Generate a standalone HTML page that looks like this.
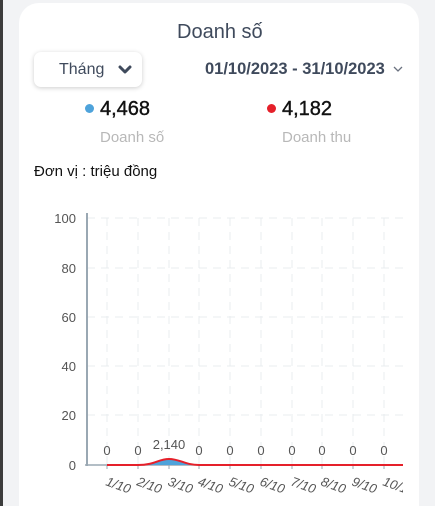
<!DOCTYPE html>
<html style="margin:0;width:435px;height:506px;overflow:hidden"><head><meta charset="utf-8"><style>
body{margin:0;width:435px;height:506px;overflow:hidden;background:#f2f3f5;font-family:"Liberation Sans",sans-serif;position:relative}
.strip{position:absolute;left:0;top:0;width:3px;height:506px;background:#3c3c3c}
.card{position:absolute;left:19px;top:3px;width:400px;height:503px;background:#fff;border-radius:20px 20px 0 0}
.t{position:absolute;white-space:nowrap}
</style></head><body>
<div class="strip"></div>
<div class="card"></div>
<div class="t" style="left:177px;top:21px;font-size:20px;color:#3f4a5c">Doanh số</div>
<div style="position:absolute;left:34px;top:52px;width:108px;height:35px;background:#fff;border-radius:7px;box-shadow:0 1px 5px rgba(0,0,0,.2)"></div>
<div class="t" style="left:59px;top:61px;font-size:16px;color:#3f4a5c">Tháng</div>
<svg style="position:absolute;left:117px;top:64px" width="16" height="12"><path d="M3 3 L8 8 L13 3" stroke="#3f4a5c" stroke-width="3" fill="none" stroke-linecap="round" stroke-linejoin="round"/></svg>
<div class="t" style="left:205px;top:60px;font-size:16.5px;font-weight:bold;color:#3f4a5c">01/10/2023 - 31/10/2023</div>
<svg style="position:absolute;left:393px;top:65px" width="10" height="8"><path d="M1 2 L5 6 L9 2" stroke="#6b7280" stroke-width="1.3" fill="none"/></svg>
<div style="position:absolute;left:85px;top:104px;width:9px;height:9px;border-radius:50%;background:#4ea3db"></div>
<div class="t" style="left:100px;top:98px;font-size:20px;color:#111;-webkit-text-stroke:0.4px #111">4,468</div>
<div class="t" style="left:100px;top:129px;font-size:15px;color:#b8b8b8">Doanh số</div>
<div style="position:absolute;left:267px;top:104px;width:9px;height:9px;border-radius:50%;background:#e5202a"></div>
<div class="t" style="left:282px;top:98px;font-size:20px;color:#111;-webkit-text-stroke:0.4px #111">4,182</div>
<div class="t" style="left:282px;top:129px;font-size:15px;color:#b8b8b8">Doanh thu</div>
<div class="t" style="left:34px;top:163px;font-size:15px;color:#111">Đơn vị : triệu đồng</div>
<svg style="position:absolute;left:0;top:0" width="435" height="506" font-family="Liberation Sans,sans-serif">
<g stroke="#e9ecef" stroke-width="1" stroke-dasharray="8,6">
<line x1="87" y1="218" x2="403" y2="218"/><line x1="87" y1="268" x2="403" y2="268"/><line x1="87" y1="317" x2="403" y2="317"/><line x1="87" y1="366" x2="403" y2="366"/><line x1="87" y1="415" x2="403" y2="415"/>
<line x1="107" y1="218" x2="107" y2="465"/><line x1="138" y1="218" x2="138" y2="465"/><line x1="169" y1="218" x2="169" y2="465"/><line x1="199" y1="218" x2="199" y2="465"/><line x1="230" y1="218" x2="230" y2="465"/><line x1="261" y1="218" x2="261" y2="465"/><line x1="292" y1="218" x2="292" y2="465"/><line x1="322" y1="218" x2="322" y2="465"/><line x1="353" y1="218" x2="353" y2="465"/><line x1="384" y1="218" x2="384" y2="465"/>
</g>
<line x1="87" y1="213" x2="87" y2="466" stroke="#9aa8b3" stroke-width="2"/>
<line x1="85" y1="465" x2="403" y2="465" stroke="#9aa8b3" stroke-width="1.5"/>
<g stroke="#9aa8b3" stroke-width="1"><line x1="107" y1="465" x2="107" y2="469"/><line x1="138" y1="465" x2="138" y2="469"/><line x1="169" y1="465" x2="169" y2="469"/><line x1="199" y1="465" x2="199" y2="469"/><line x1="230" y1="465" x2="230" y2="469"/><line x1="261" y1="465" x2="261" y2="469"/><line x1="292" y1="465" x2="292" y2="469"/><line x1="322" y1="465" x2="322" y2="469"/><line x1="353" y1="465" x2="353" y2="469"/><line x1="384" y1="465" x2="384" y2="469"/></g>
<g font-size="13" fill="#555" text-anchor="end"><text x="76" y="223">100</text><text x="76" y="273">80</text><text x="76" y="322">60</text><text x="76" y="371">40</text><text x="76" y="420">20</text><text x="76" y="470">0</text></g>
<path d="M138 465 C155 465 158 459 169 459 C180 459 185 465 199 465 Z" fill="#4ea3db"/>
<path d="M107 465 L138 465 C155 465 158 459 169 459 C180 459 185 465 199 465 L403 465" stroke="#e5202a" stroke-width="2" fill="none"/>
<g font-size="13" fill="#555" text-anchor="middle"><text x="107" y="455">0</text><text x="138" y="455">0</text><text x="169" y="449">2,140</text><text x="199" y="455">0</text><text x="230" y="455">0</text><text x="261" y="455">0</text><text x="292" y="455">0</text><text x="322" y="455">0</text><text x="353" y="455">0</text><text x="384" y="455">0</text></g>
<g font-size="13" fill="#555" font-style="italic">
<text transform="translate(105,485) rotate(20)">1/10</text><text transform="translate(136,485) rotate(20)">2/10</text><text transform="translate(167,485) rotate(20)">3/10</text><text transform="translate(197,485) rotate(20)">4/10</text><text transform="translate(228,485) rotate(20)">5/10</text><text transform="translate(259,485) rotate(20)">6/10</text><text transform="translate(290,485) rotate(20)">7/10</text><text transform="translate(320,485) rotate(20)">8/10</text><text transform="translate(351,485) rotate(20)">9/10</text><text transform="translate(382,485) rotate(20)">10/1</text>
</g>
<rect x="403" y="470" width="16" height="36" fill="#fff"/>
</svg>
</body></html>
